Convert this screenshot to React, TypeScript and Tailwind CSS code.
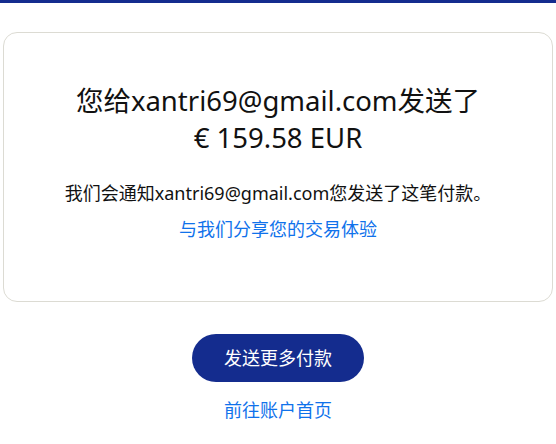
export default function App() {
  return (
    <div
      className="min-h-[444px] bg-white"
      style={{ fontFamily: '"Noto Sans", "Noto Sans CJK SC", sans-serif' }}
    >
      <div className="h-[3px] bg-[#142c8e]" />
      <div className="px-[3px] pt-[29px]">
        <div className="h-[270px] rounded-[14px] border border-[#dcdbd3] flex flex-col items-center pt-[49px]">
          <h1 className="text-[27.5px] leading-[37px] text-[#111] text-center font-normal">
            您给xantri69@gmail.com发送了
            <br />€ 159.58 EUR
          </h1>
          <p className="mt-[24px] text-[18px] leading-[26px] text-[#111]">
            我们会通知xantri69@gmail.com您发送了这笔付款。
          </p>
          <a className="mt-[10px] text-[18px] leading-[26px] text-[#1072eb] cursor-pointer">
            与我们分享您的交易体验
          </a>
        </div>
      </div>
      <div className="flex flex-col items-center pt-[32px]">
        <button className="h-[48px] w-[172px] rounded-full bg-[#142c8e] text-white text-[18px]">
          发送更多付款
        </button>
        <a className="mt-[15px] text-[18px] leading-[26px] text-[#1072eb] cursor-pointer">
          前往账户首页
        </a>
      </div>
    </div>
  );
}
